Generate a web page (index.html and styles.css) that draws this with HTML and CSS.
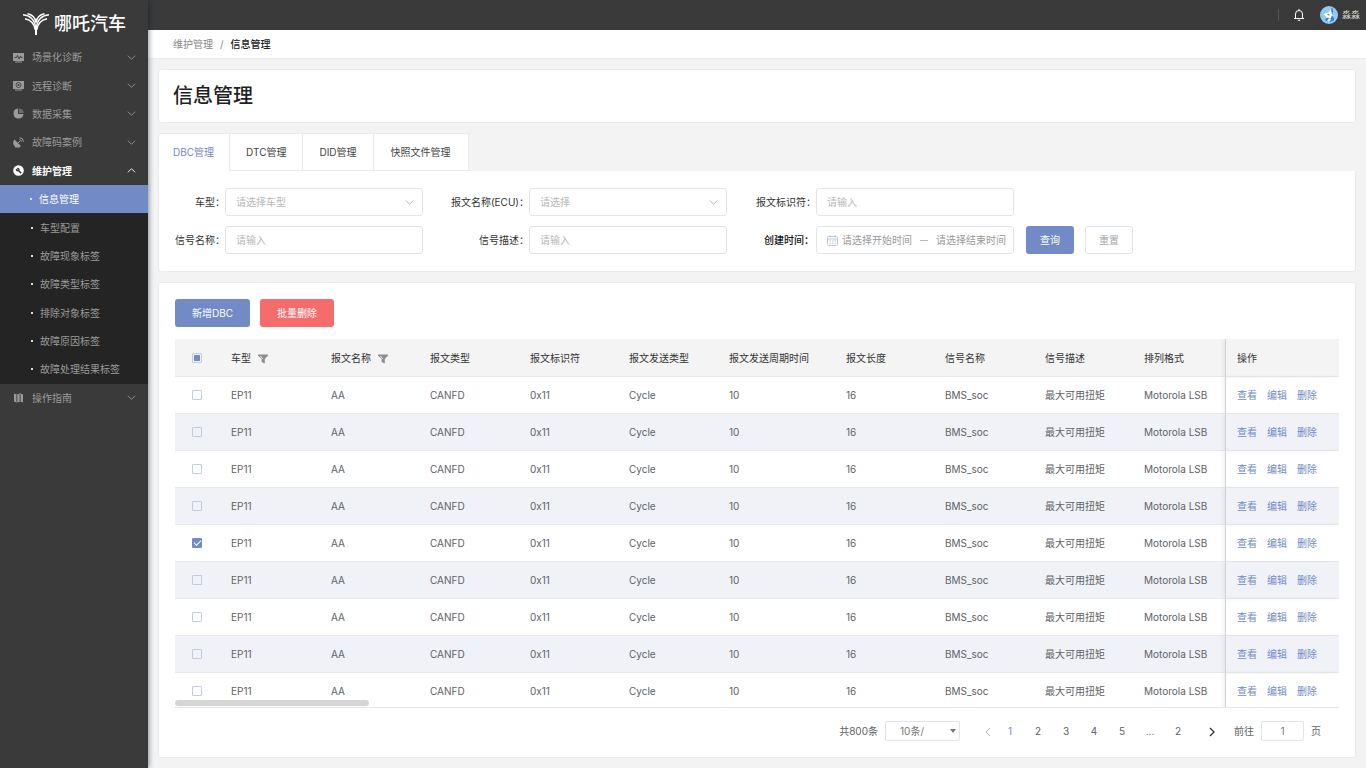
FILE: index.html
```html
<!DOCTYPE html>
<html lang="zh-CN">
<head>
<meta charset="utf-8">
<title>信息管理</title>
<link rel="stylesheet" href="styles.css">
</head>
<body>
<svg class="defs" aria-hidden="true">
  <symbol id="down" viewBox="0 0 10 10"><path d="M1 3l4 4 4-4" fill="none" stroke="currentColor"/></symbol>
  <symbol id="up" viewBox="0 0 10 10"><path d="M1 7l4-4 4 4" fill="none" stroke="currentColor"/></symbol>
  <symbol id="funnel" viewBox="0 0 10 10"><path d="M0 .5h10v1L6.8 5v4.5L3.6 8V5L0 1.5z" fill="#8d8d8d"/><path d="M2.4 2l2.4 3" stroke="#e8e8e8" stroke-width="1"/></symbol>
</svg>
<div class="app">
  <aside class="sidebar">
    <div class="logo">
      <svg class="logo-mark" viewBox="0 0 26 22" fill="none" stroke="#fff" stroke-width="1.5">
        <path d="M4.500 .8C9 1.500 12.200 5 13 9.500C13.800 5 17 1.500 21.500 .8"/>
        <path d="M0 1.800C7 2.300 12 7 12.400 14M26 1.800C19 2.300 14 7 13.600 14"/>
        <path d="M2 5.800C7.500 7 11.500 11 12.300 17M24 5.800C18.500 7 14.500 11 13.700 17"/>
        <path d="M13 13v9" stroke-width="2"/>
      </svg>
      <span>哪吒汽车</span>
    </div>
    <nav class="menu">
      <a class="item" href="#"><svg class="ico" viewBox="0 0 11 11"><path d="M0 1h11v8H0zM2 9.500h7v1H2z" fill="currentColor"/><path d="M1.500 5.500h2l1-2 1.500 3.500 1.500-3 .5 1.500h1.500" fill="none" stroke="#3a3a3a" stroke-width=".9"/></svg><span>场景化诊断</span><svg class="arrow"><use href="#down"/></svg></a>
      <a class="item" href="#"><svg class="ico" viewBox="0 0 11 11"><path d="M0 1h11v8H0zM2 9.500h7v1H2z" fill="currentColor"/><circle cx="5.500" cy="5" r="2.500" fill="none" stroke="#3a3a3a" stroke-width=".8"/><circle cx="5.500" cy="5" r="1" fill="#3a3a3a"/></svg><span>远程诊断</span><svg class="arrow"><use href="#down"/></svg></a>
      <a class="item" href="#"><svg class="ico" viewBox="0 0 11 11"><path d="M5 .5V6h5.500A5 5 0 1 1 5 .5z" fill="currentColor"/><path d="M6 .5A5 5 0 0 1 10.700 5H6z" fill="#6d6d6d"/></svg><span>数据采集</span><svg class="arrow"><use href="#down"/></svg></a>
      <a class="item" href="#"><svg class="ico" viewBox="0 0 11 11"><path d="M1.500 2.500L8 9A4.300 4.300 0 0 1 1.500 2.500zM2 9h5v1.500H2z" fill="currentColor"/><path d="M5 6l2-2M6.500 2.500a2.500 2.500 0 0 1 2 2.200M6.500.7a4 4 0 0 1 4 4" fill="none" stroke="currentColor"/></svg><span>故障码案例</span><svg class="arrow"><use href="#down"/></svg></a>
      <a class="item open" href="#"><svg class="ico" viewBox="0 0 11 11"><circle cx="5.500" cy="5.500" r="5.300" fill="currentColor"/><circle cx="4.700" cy="4.600" r="1.900" fill="#3a3a3a"/><path d="M5.500 5.500l2.600 2.600" stroke="#3a3a3a" stroke-width="1.500"/><path d="M3 2.800l1.600 1.700" stroke="#fff"/></svg><span>维护管理</span><svg class="arrow"><use href="#up"/></svg></a>
      <div class="submenu">
        <a class="sub active" href="#">信息管理</a>
        <a class="sub" href="#">车型配置</a>
        <a class="sub" href="#">故障现象标签</a>
        <a class="sub" href="#">故障类型标签</a>
        <a class="sub" href="#">排除对象标签</a>
        <a class="sub" href="#">故障原因标签</a>
        <a class="sub" href="#">故障处理结果标签</a>
      </div>
      <a class="item" href="#"><svg class="ico" viewBox="0 0 11 11"><path d="M1 1.500l2.400 1v8L1 9.500zM4.300 2.500l2.400-1v8l-2.400 1zM7.600 1.500l2.400 1v8l-2.400-1z" fill="currentColor"/><path d="M3.400 2.500l.9 0M6.700 1.500h.9M3.400 10h.9M6.700 9.500h.9" stroke="currentColor" stroke-width=".8"/></svg><span>操作指南</span><svg class="arrow"><use href="#down"/></svg></a>
    </nav>
  </aside>
  <div class="page">
    <header class="topbar">
      <span class="divider"></span>
      <button class="bell" aria-label="通知"><svg viewBox="0 0 10 12"><path d="M1.500 9.500V5a3.500 3.500 0 0 1 7 0v4.500M0 9.500h10M5 0v1.500M3.800 11.300h2.400" fill="none" stroke="#fff"/></svg></button>
      <svg class="avatar" viewBox="0 0 18 18"><circle cx="9" cy="9" r="9" fill="#8fcbf7"/><path d="M3.500 8l5-1.500L11 3l1 4 .5 3-1.500 3-4-1z" fill="#fff"/><path d="M11 3l1.500-1 .8 5-1.300 1zM5 13l3-1.500 2 2 2-4 2 2.500v2.500L10 16l-4-1z" fill="#3f7fd0"/><path d="M9 12.500l2 1-2 2.500-2-1.500z" fill="#e9f5ff"/><path d="M7.500 8.500l2 .5" stroke="#2f5fae"/></svg>
      <span class="user">淼淼</span>
    </header>
    <div class="crumbs"><a href="#">维护管理</a><span>/</span><b>信息管理</b></div>
    <main class="main">
      <section class="card title"><h1>信息管理</h1></section>
      <div class="tabs">
        <button class="tab on">DBC管理</button><button class="tab">DTC管理</button><button class="tab">DID管理</button><button class="tab">快照文件管理</button>
      </div>
      <form class="card filters">
        <label for="model">车型：</label>
        <div class="pick"><select id="model"><option>请选择车型</option></select><svg><use href="#down"/></svg></div>
        <label for="ecu">报文名称(ECU)：</label>
        <div class="pick"><select id="ecu"><option>请选择</option></select><svg><use href="#down"/></svg></div>
        <label for="mid">报文标识符：</label>
        <input class="box" id="mid" placeholder="请输入">
        <span></span>
        <label for="sname">信号名称：</label>
        <input class="box" id="sname" placeholder="请输入">
        <label for="sdesc">信号描述：</label>
        <input class="box" id="sdesc" placeholder="请输入">
        <label class="strong" for="start">创建时间：</label>
        <div class="box range">
          <svg viewBox="0 0 11 11" fill="none" stroke="#b9c1d9" stroke-width=".9"><rect x=".5" y="1.500" width="10" height="9" rx="1"/><path d="M.5 4h10M3 0v2.500M8 0v2.500M2.500 6h1.500M5 6h1.500M7.500 6h1.500M2.500 8.300h1.500M5 8.300h1.500M7.500 8.300h1.500"/></svg>
          <input id="start" placeholder="请选择开始时间"><i></i><input aria-label="结束时间" placeholder="请选择结束时间">
        </div>
        <div class="actions"><button type="button" class="btn primary">查询</button><button type="button" class="btn plain">重置</button></div>
      </form>
      <section class="card list">
        <div class="tools"><button class="btn primary">新增DBC</button><button class="btn danger">批量删除</button></div>
        <div class="scroller">
          <table>
            <colgroup><col class="c-check"><col class="c-a"><col class="c-b"><col class="c-a"><col class="c-b"><col class="c-a"><col class="c-cycle"><col class="c-b"><col class="c-a"><col class="c-b"><col class="c-format"><col class="c-ops"></colgroup>
            <thead><tr><th class="check"><input type="checkbox" class="some" aria-label="全选"></th><th>车型<svg class="funnel"><use href="#funnel"/></svg></th><th>报文名称<svg class="funnel"><use href="#funnel"/></svg></th><th>报文类型</th><th>报文标识符</th><th>报文发送类型</th><th>报文发送周期时间</th><th>报文长度</th><th>信号名称</th><th>信号描述</th><th>排列格式</th><th class="ops">操作</th></tr></thead>
            <tbody id="rows"></tbody>
          </table>
          <div class="bar"></div>
        </div>
        <div class="pager">
          <span class="total">共800条</span>
          <div class="size"><select aria-label="每页条数"><option>10条/</option></select><svg viewBox="0 0 6 4"><path d="M0 0h6L3 4z" fill="#777"/></svg></div>
          <button class="prev" aria-label="上一页"><svg viewBox="0 0 6 10"><path d="M5 1L1 5l4 4" fill="none" stroke="#aab0bd"/></svg></button>
          <button class="on">1</button><button>2</button><button>3</button><button>4</button><button>5</button><button>...</button><button>2</button>
          <button class="next" aria-label="下一页"><svg viewBox="0 0 6 10"><path d="M1 1l4 4-4 4" fill="none" stroke="#333" stroke-width="1.300"/></svg></button>
          <label for="goto">前往</label><input id="goto" value="1"><span>页</span>
        </div>
      </section>
    </main>
  </div>
</div>
<script src="rows.js"></script>
</body>
</html>
```
FILE: rows.js
```js
const cells = ["EP11", "AA", "CANFD", "0x11", "Cycle", "10", "16", "BMS_soc", "最大可用扭矩", "Motorola LSB"];
const body = document.getElementById("rows");
for (let i = 0; i < 9; i++) {
  const tr = document.createElement("tr");
  tr.innerHTML =
    `<td class="check"><input type="checkbox" aria-label="选择第${i + 1}行"${i === 4 ? " checked" : ""}></td>` +
    cells.map((c) => `<td>${c}</td>`).join("") +
    `<td class="ops"><a href="#">查看</a><a href="#">编辑</a><a href="#">删除</a></td>`;
  body.append(tr);
}
```
FILE: styles.css
```css
* { box-sizing: border-box; }
body { margin: 0; background: #f3f3f3; color: #606266; font: 10px/14px Inter, "Noto Sans CJK SC", sans-serif; }
button, input, select { font: inherit; color: inherit; margin: 0; }
button { border: 0; padding: 0; background: none; cursor: pointer; }
a { color: inherit; text-decoration: none; }
.defs { position: absolute; width: 0; height: 0; }
.app { display: flex; min-height: 100vh; }

.sidebar { width: 148px; flex: none; background: #3a3a3a; color: #9a9a9a; position: relative; z-index: 1; box-shadow: 1px 0 5px rgba(0, 21, 41, .45); }
.logo { display: flex; align-items: center; gap: 5px; height: 43px; padding: 4px 0 0 23px; color: #fff; font-size: 18px; font-weight: 500; line-height: 24px; }
.logo-mark { width: 26px; height: 22px; }
.menu { display: flex; flex-direction: column; min-height: 369px; }
.item { flex: 1; display: flex; align-items: center; padding: 0 12px 0 13px; }
.item span { flex: 1; margin-left: 8px; }
.ico { width: 11px; height: 11px; }
.arrow { width: 9px; height: 9px; }
.open { color: #fff; font-weight: 700; }
.submenu { flex: 7; display: flex; flex-direction: column; background: #242424; }
.sub { flex: 1; display: flex; align-items: center; gap: 7px; padding-left: 31px; }
.sub::before { content: ""; width: 2px; height: 2px; background: #ddd; }
.active { background: #728ac6; color: #fff; padding-left: 30px; }

.page { flex: 1; min-width: 0; display: flex; flex-direction: column; }
.topbar { height: 30px; background: #3a3a3a; color: #ddd; display: flex; align-items: center; justify-content: flex-end; padding-right: 6px; font-size: 9px; }
.divider { width: 1px; height: 12px; background: #555; }
.bell { width: 10px; height: 12px; margin: 0 16px 0 15px; }
.bell svg { display: block; }
.avatar { width: 18px; height: 18px; margin-right: 4px; }
.crumbs { height: 29px; background: #fff; border-bottom: 1px solid #eee; display: flex; align-items: center; padding-left: 25px; gap: 7px; color: #888; }
.crumbs b { color: #222; font-weight: 500; }

.main { flex: 1; display: flex; flex-direction: column; padding: 10px; }
.card { background: #fff; border: 1px solid #ebebeb; border-radius: 3px; }
.title { padding: 12px 14px; margin-bottom: 10px; }
h1 { margin: 0; font-size: 20px; line-height: 28px; font-weight: 500; color: #1f1f26; }
.tabs { display: flex; align-items: stretch; }
.tab { height: 38px; padding: 0 16px; background: #fff; border: 1px solid #ebebeb; border-left: 0; color: #444; }
.tab:last-child { padding: 0 17px; }
.tab.on { color: #728ac6; border-bottom-color: #fff; border-radius: 3px 0 0; padding: 0 15px 0 14px; border-left: 1px solid #ebebeb; }
.filters { display: grid; grid-template-columns: 50px minmax(0, 198px) 106px minmax(0, 198px) 89px minmax(0, 198px) 1fr; row-gap: 10px; padding: 17px 16px; border-top: 0; border-radius: 0 0 3px 3px; color: #333; align-items: center; }
.filters label { text-align: right; white-space: nowrap; }
.filters .strong { font-weight: 500; color: #111; padding-right: 2px; }
.box, .pick select { width: 100%; height: 28px; border: 1px solid #e2e4ec; border-radius: 3px; background: #fff; padding: 0 10px; outline: 0; }
.pick { position: relative; }
.pick select, .size select { appearance: none; color: #b8b8b8; }
.pick svg { position: absolute; right: 9px; top: 10px; width: 9px; height: 9px; color: #a8acb8; pointer-events: none; }
::placeholder { color: #b8b8b8; opacity: 1; }
.range { display: flex; align-items: center; padding-right: 7px; }
.range svg { width: 11px; height: 11px; margin-right: 4px; flex: none; }
.range input { width: 71px; min-width: 0; border: 0; padding: 0; outline: 0; }
.range ::placeholder { color: #999; }
.range i { width: 8px; height: 1px; margin: 0 8px; background: #bbb; flex: none; }
.actions { display: flex; gap: 11px; padding-left: 12px; }
.btn { height: 28px; padding: 0 14px; border-radius: 3px; }
.primary { background: #728ac6; color: #fff; }
.danger { background: #f56c6c; color: #fff; }
.plain { padding: 0 13px; border: 1px solid #e2e4ec; color: #aaa; background: #fff; }

.list { flex: 1; margin-top: 10px; padding: 16px; display: flex; flex-direction: column; }
.tools { display: flex; gap: 10px; margin-bottom: 12px; }
.tools .btn { padding: 0 17px; }
.scroller { position: relative; height: 369px; overflow: hidden; border-bottom: 1px solid #e6e6e6; }
table { width: 100%; table-layout: fixed; border-collapse: separate; border-spacing: 0; }
.c-check { width: 44px; }
.c-a { width: 100px; }
.c-b { width: 99px; }
.c-cycle { width: 117px; }
.c-format { width: 93px; }
.c-ops { width: 114px; }
th, td { height: 37px; padding: 0 0 0 12px; text-align: left; white-space: nowrap; border-bottom: 1px solid #e9eaee; }
th { height: 38px; background: #f4f4f4; font-weight: 400; color: #333; }
tbody tr:nth-child(even) { background: #f0f2f8; }
td a { color: #728ac6; margin-right: 10px; }
.check { padding-left: 17px; }
.ops { border-left: 1px solid #d2d2d6; box-shadow: -2px 0 4px rgba(0, 0, 0, .06); padding-left: 11px; }
.funnel { width: 10px; height: 10px; margin-left: 7px; vertical-align: -2px; }
input[type="checkbox"] { appearance: none; display: grid; place-items: center; width: 10px; height: 10px; border: 1px solid #c3cbdf; border-radius: 1px; }
.some::before { content: ""; width: 6px; height: 6px; background: #728ac6; }
input[type="checkbox"]:checked { background: #728ac6; border-color: #728ac6; }
input[type="checkbox"]:checked::before { content: ""; width: 6px; height: 3px; border: solid #fff; border-width: 0 0 1px 1px; transform: translateY(-1px) rotate(-45deg); }
.bar { position: absolute; left: 0; bottom: 1px; width: 194px; height: 6px; border-radius: 3px; background: #d6d6d6; }

.pager { display: flex; align-items: center; justify-content: flex-end; padding: 13px 18px 0 0; }
.pager button { width: 28px; height: 20px; }
.pager button svg { width: 6px; height: 10px; vertical-align: middle; }
.pager .on { color: #728ac6; }
.pager .prev { width: 16px; margin-left: 20px; }
.pager .next { width: 40px; margin-right: 2px; }
.size { position: relative; margin-left: 7px; }
.size select, #goto { height: 20px; border: 1px solid #e2e4ec; border-radius: 2px; background: #fff; color: #777; }
.size select { width: 75px; padding: 0 14px; }
.size svg { position: absolute; right: 4px; top: 8px; width: 6px; height: 4px; pointer-events: none; }
#goto { width: 43px; margin: 0 7px; text-align: center; padding: 0; }
```
